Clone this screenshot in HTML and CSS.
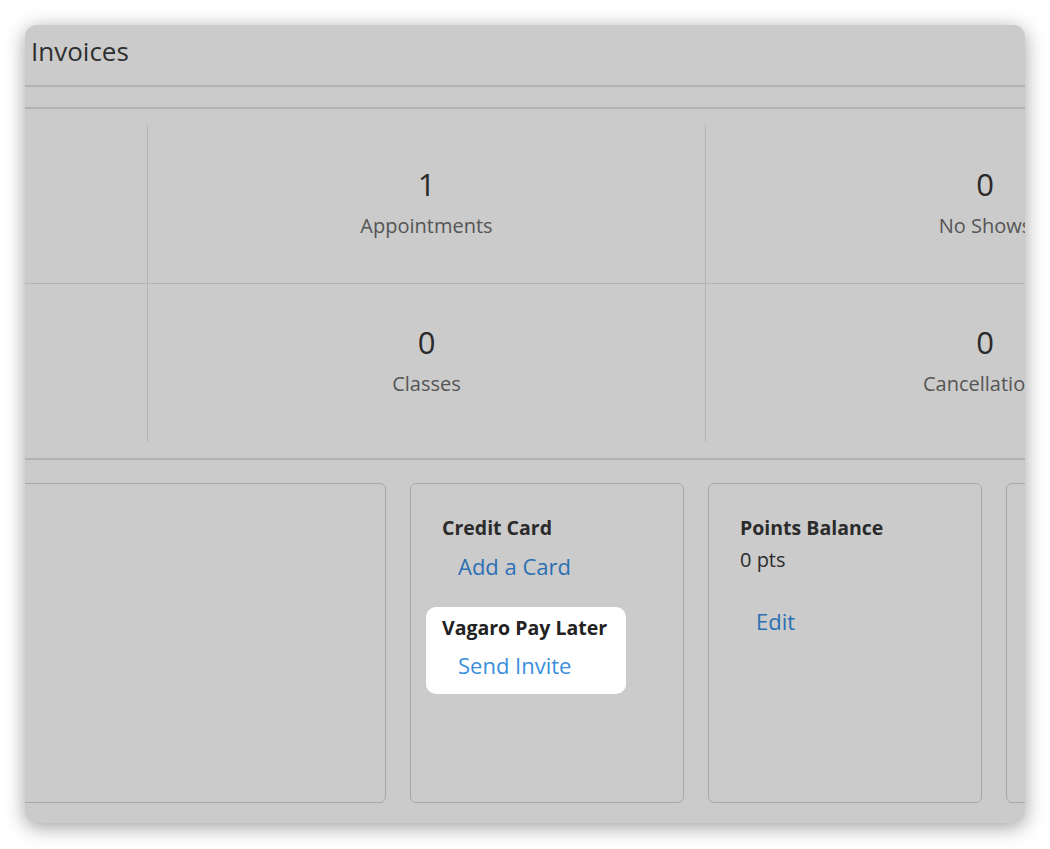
FILE: index.html
```html
<!DOCTYPE html>
<html lang="en">
<head>
    <meta charset="UTF-8">
    <title>Customer | Invoices</title>
    <link rel="stylesheet" href="styles.css">
</head>
<body>

    <div class="frame">
        <!-- Title -->
        <div class="title">Invoices</div>
        <div class="tabs"></div>

        <!-- Stats -->
        <div class="stats">
            <div class="stat edge"></div>
            <div class="stat">
                <div class="num">1</div>
                <div class="label">Appointments</div>
            </div>
            <div class="stat">
                <div class="num">0</div>
                <div class="label">No Shows</div>
            </div>
            <div class="stat edge last"></div>
            <div class="stat last">
                <div class="num">0</div>
                <div class="label">Classes</div>
            </div>
            <div class="stat last">
                <div class="num">0</div>
                <div class="label">Cancellations</div>
            </div>
        </div>

        <!-- Cards -->
        <div class="cards">
            <div class="card wide"></div>
            <div class="card">
                <div class="card-title">Credit Card</div>
                <a href="#" class="link">Add a Card</a>
                <div class="highlight">
                    <div class="card-title">Vagaro Pay Later</div>
                    <a href="#" class="link">Send Invite</a>
                </div>
            </div>
            <div class="card">
                <div class="card-title">Points Balance</div>
                <div class="pts">0 pts</div>
                <a href="#" class="link edit">Edit</a>
            </div>
            <div class="card"></div>
        </div>
    </div>

</body>
</html>
```

FILE: styles.css
```css
/* General */
body {
    font-family: "Open Sans", Arial, sans-serif;
    margin: 0;
    padding: 0;
    background-color: #fff;
}

.frame {
    margin: 25px;
    width: 1000px;
    height: 798px;
    border-radius: 12px;
    background: #cbcbcb;
    box-shadow: 0 4px 20px rgba(0, 0, 0, 0.38);
    overflow: hidden;
}

/* Title */
.title {
    font-size: 26px;
    line-height: 36px;
    color: #2f2f2f;
    padding: 8px 6px 16px;
    border-bottom: 2px solid #b3b3b3;
}

.tabs {
    height: 20px;
    border-bottom: 2px solid #b3b3b3;
}

/* Stats */
.stats {
    display: grid;
    grid-template-columns: 123px 558px 558px;
    padding: 16px 0 16px;
    border-bottom: 2px solid #b3b3b3;
}

.stat {
    height: 159px;
    text-align: center;
    border-bottom: 1px solid #b4b4b4;
    border-right: 1px solid #b4b4b4;
    box-sizing: border-box;
    padding-top: 41px;
    white-space: nowrap;
    overflow: hidden;
}

.stat.last {
    border-bottom: none;
    height: 158px;
    padding-top: 40px;
}

.stat:nth-child(3n) {
    border-right: none;
}

.num {
    font-size: 31px;
    line-height: 36px;
    color: #2a2a2a;
}

.label {
    font-size: 20px;
    line-height: 24px;
    color: #555;
    margin-top: 12px;
}

/* Cards */
.cards {
    display: flex;
    gap: 24px;
    margin: 23px 0 0 -20px;
}

.card {
    flex: 0 0 auto;
    width: 274px;
    height: 320px;
    box-sizing: border-box;
    border: 1.5px solid #a8a8a8;
    border-radius: 6px;
    padding: 32px 0 0 31px;
}

.card.wide {
    width: 381px;
}

.card-title {
    font-size: 19.5px;
    line-height: 24px;
    font-weight: bold;
    color: #2b2b2b;
}

.link {
    display: block;
    font-size: 22px;
    line-height: 28px;
    color: #2b70b3;
    text-decoration: none;
    margin: 12px 0 0 16px;
}

.pts {
    font-size: 20px;
    line-height: 24px;
    color: #2b2b2b;
    margin-top: 8px;
}

.link.edit {
    margin-top: 35px;
}

.highlight {
    width: 200px;
    box-sizing: border-box;
    background: #fff;
    border-radius: 10px;
    margin: 27px 0 0 -16px;
    padding: 9px 16px 15px;
}

.highlight .card-title {
    color: #222;
}

.highlight .link {
    color: #3a8fdc;
    margin-top: 11px;
}
```
